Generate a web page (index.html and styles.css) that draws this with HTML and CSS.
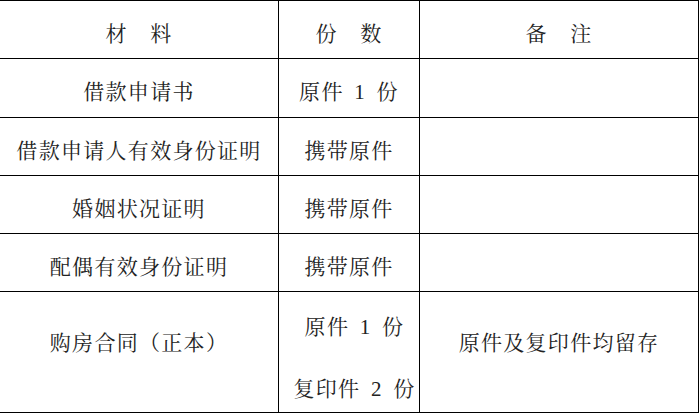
FILE: index.html
```html
<!DOCTYPE html>
<html lang="zh-CN">
<head>
<meta charset="utf-8">
<link rel="stylesheet" href="styles.css">
</head>
<body>
<table class="doc">
  <colgroup>
    <col class="c1"><col class="c2"><col class="c3">
  </colgroup>
  <tr class="row">
    <td>材　料</td>
    <td>份　数</td>
    <td>备　注</td>
  </tr>
  <tr class="row row-b">
    <td>借款申请书</td>
    <td>原件 1 份</td>
    <td></td>
  </tr>
  <tr class="row">
    <td>借款申请人有效身份证明</td>
    <td>携带原件</td>
    <td></td>
  </tr>
  <tr class="row">
    <td>婚姻状况证明</td>
    <td>携带原件</td>
    <td></td>
  </tr>
  <tr class="row">
    <td>配偶有效身份证明</td>
    <td>携带原件</td>
    <td></td>
  </tr>
  <tr class="row-last">
    <td class="mid">购房合同（正本）</td>
    <td class="stack">
      <div class="l1">原件 1 份</div>
      <div class="l2">复印件 2 份</div>
    </td>
    <td class="mid">原件及复印件均留存</td>
  </tr>
</table>
</body>
</html>
```

FILE: styles.css
```css
html, body {
  margin: 0;
  padding: 0;
  background: #ffffff;
}
.doc {
  border-collapse: separate;
  border-spacing: 0;
  table-layout: fixed;
  width: 699px;
  font-family: "Liberation Serif", "Noto Serif CJK SC", "Noto Sans CJK SC", serif;
  font-size: 21px;
  letter-spacing: 1.3px;
  word-spacing: 4px;
  color: #222222;
}
.c1 { width: 279px; }
.c2 { width: 141px; }
.c3 { width: 279px; }
.doc td {
  border-top: 1px solid #000;
  border-right: 1px solid #000;
  text-align: center;
  vertical-align: middle;
  padding: 8px 0 0 0;
  white-space: nowrap;
  line-height: 26px;
}
.row td { height: 49px; }
.row-b td { height: 50px; }
.row-last td {
  border-bottom: 1px solid #000;
  height: 120px;
  padding: 0;
}
.row-last td.mid {
  padding-bottom: 18px;
  height: 102px;
}
.row-last td.stack {
  vertical-align: top;
  padding: 20px 0 0 11px;
  height: 100px;
}
.l1 { line-height: 30px; }
.l2 { line-height: 30px; margin-top: 32px; }
```
